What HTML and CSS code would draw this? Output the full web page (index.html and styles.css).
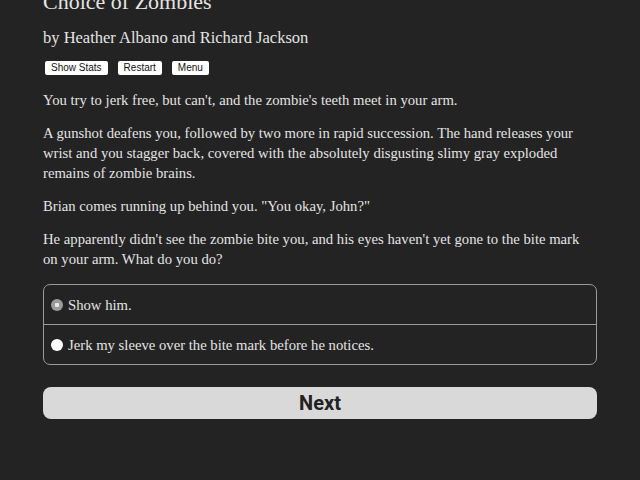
FILE: index.html
```html
<!DOCTYPE html>
<html lang="en">
<head>
    <meta charset="UTF-8">
    <meta name="viewport" content="width=device-width, initial-scale=1.0">
    <title>Choice of Zombies</title>
    <link rel="stylesheet" href="styles.css">
</head>
<body>

    <div class="container">
        <div class="header">
            <h1>Choice of Zombies</h1>
            <h2>by Heather Albano and Richard Jackson</h2>
            <div class="buttons">
                <button class="small-button">Show Stats</button>
                <button class="small-button">Restart</button>
                <button class="small-button">Menu</button>
            </div>
        </div>

        <div id="text">
            <p>You try to jerk free, but can't, and the zombie's teeth meet in your arm.</p>
            <p>A gunshot deafens you, followed by two more in rapid succession. The hand releases your wrist and you stagger back, covered with the absolutely disgusting slimy gray exploded remains of zombie brains.</p>
            <p>Brian comes running up behind you. "You okay, John?"</p>
            <p>He apparently didn't see the zombie bite you, and his eyes haven't yet gone to the bite mark on your arm. What do you do?</p>
        </div>

        <form class="choice">
            <label class="option">
                <input type="radio" name="choice" value="0" class="focused">
                <span>Show him.</span>
            </label>
            <label class="option">
                <input type="radio" name="choice" value="1">
                <span>Jerk my sleeve over the bite mark before he notices.</span>
            </label>
        </form>

        <button class="next" type="button">Next</button>
    </div>

</body>
</html>
```

FILE: styles.css
```css
body {
    margin: 0;
    background-color: #232323;
    color: #e4e4e4;
    font-family: 'Liberation Serif', serif;
    font-size: 14.7px;
    line-height: 20px;
}

.container {
    width: 554px;
    margin: -13px auto 0;
}

h1 {
    margin: 0;
    font-size: 22px;
    font-weight: normal;
    line-height: 30px;
}

h2 {
    margin: 9px 0 0;
    font-size: 16.5px;
    font-weight: normal;
    line-height: 24px;
}

.buttons {
    display: flex;
    gap: 10px;
    margin: 11px 0 0 2px;
}

.small-button {
    height: 14px;
    padding: 0 6px;
    border: none;
    border-radius: 2px;
    background-color: #fff;
    color: #111;
    font-family: 'Liberation Sans', sans-serif;
    font-size: 10px;
    line-height: 14px;
}

#text {
    margin-top: 15px;
}

p {
    margin: 0 0 13px;
}

.choice {
    margin-top: 15px;
    border: 1px solid #9a9a9a;
    border-radius: 7px;
}

.option {
    display: flex;
    align-items: center;
    height: 39px;
    padding-left: 7px;
}

.option + .option {
    border-top: 1px solid #9a9a9a;
}

/* radios drawn by hand so they stay flat on the dark page */
.option input {
    appearance: none;
    flex: none;
    margin: 0 5px 0 0;
    width: 12px;
    height: 12px;
    border-radius: 50%;
    background-color: #fff;
}

.option input.focused {
    background: radial-gradient(circle, #e8e8e8 0 2px, #9c9c9c 2.5px);
}

.next {
    display: block;
    width: 100%;
    height: 32px;
    margin-top: 22px;
    border: none;
    border-radius: 8px;
    background-color: #d9d9d9;
    color: #222;
    font-family: Roboto, sans-serif;
    font-size: 20px;
    font-weight: bold;
}
```
